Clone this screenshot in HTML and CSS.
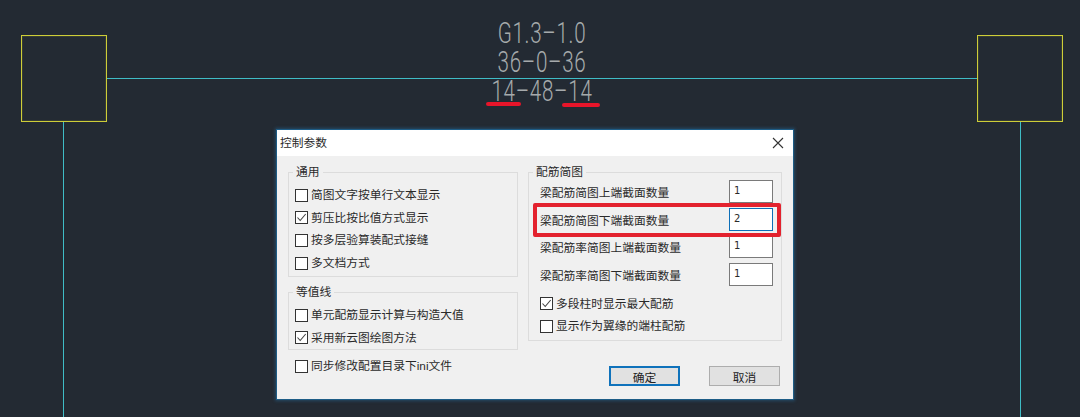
FILE: index.html
```html
<!DOCTYPE html>
<html lang="zh-CN">
<head>
<meta charset="utf-8">
<title>控制参数</title>
<link rel="stylesheet" href="styles.css">
</head>
<body>
<main class="canvas">
  <div class="column-box box-left"></div>
  <div class="column-box box-right"></div>
  <div class="beam-line"></div>
  <div class="col-line col-line-left"></div>
  <div class="col-line col-line-right"></div>
  <div class="cad-text cad-1">G1.3–1.0</div>
  <div class="cad-text cad-2">36–0–36</div>
  <div class="cad-text cad-3">14–48–14</div>
  <div class="mark mark-a"></div>
  <div class="mark mark-b"></div>

  <section class="dialog">
    <header class="titlebar">
      <span class="title">控制参数</span>
      <svg class="close" width="12" height="12" viewBox="0 0 12 12"><path d="M1 1 L11 11 M11 1 L1 11" stroke="#333" stroke-width="1.1" fill="none"/></svg>
    </header>
    <div class="body">
      <div class="col col-l">
        <fieldset class="group g-general">
          <legend>通用</legend>
          <label class="check"><span class="box"></span>简图文字按单行文本显示</label>
          <label class="check"><span class="box on"><svg width="11" height="11" viewBox="0 0 11 11"><path d="M1.5 5.5 L4.2 8.5 L9.7 2" stroke="#444" stroke-width="1.1" fill="none"/></svg></span>剪压比按比值方式显示</label>
          <label class="check"><span class="box"></span>按多层验算装配式接缝</label>
          <label class="check"><span class="box"></span>多文档方式</label>
        </fieldset>
        <fieldset class="group g-contour">
          <legend>等值线</legend>
          <label class="check"><span class="box"></span>单元配筋显示计算与构造大值</label>
          <label class="check"><span class="box on"><svg width="11" height="11" viewBox="0 0 11 11"><path d="M1.5 5.5 L4.2 8.5 L9.7 2" stroke="#444" stroke-width="1.1" fill="none"/></svg></span>采用新云图绘图方法</label>
        </fieldset>
        <label class="check check-sync"><span class="box"></span>同步修改配置目录下ini文件</label>
      </div>
      <div class="col col-r">
        <fieldset class="group g-rebar">
          <legend>配筋简图</legend>
          <div class="field"><span>梁配筋简图上端截面数量</span><span class="input">1</span></div>
          <div class="field"><span>梁配筋简图下端截面数量</span><span class="input focus">2</span></div>
          <div class="field"><span>梁配筋率简图上端截面数量</span><span class="input">1</span></div>
          <div class="field"><span>梁配筋率简图下端截面数量</span><span class="input">1</span></div>
          <label class="check check-first"><span class="box on"><svg width="11" height="11" viewBox="0 0 11 11"><path d="M1.5 5.5 L4.2 8.5 L9.7 2" stroke="#444" stroke-width="1.1" fill="none"/></svg></span>多段柱时显示最大配筋</label>
          <label class="check"><span class="box"></span>显示作为翼缘的端柱配筋</label>
        </fieldset>
        <div class="actions">
          <button class="btn btn-primary" type="button">确定</button>
          <button class="btn" type="button">取消</button>
        </div>
      </div>
    </div>
    <div class="highlight"></div>
  </section>
</main>
</body>
</html>
```
FILE: styles.css
```css
* { box-sizing: border-box; }
html, body { margin: 0; padding: 0; }
body { width: 1080px; height: 417px; overflow: hidden; background: #232a33; }
.canvas { position: relative; width: 1080px; height: 417px; background: #232a33; overflow: hidden; }

.column-box { position: absolute; top: 35px; width: 86px; height: 87px; border: 1px solid #cdcd38; box-shadow: inset 0 0 0 1px rgba(190,190,50,.12); }
.box-left { left: 21px; }
.box-right { left: 977px; }
.beam-line { position: absolute; left: 107px; top: 78px; width: 870px; height: 1px; background: #3fbcc6; }
.col-line { position: absolute; top: 122px; width: 1px; height: 295px; background: #3fbcc6; }
.col-line-left { left: 63px; }
.col-line-right { left: 1020px; }

.cad-text {
  position: absolute; left: 440px; width: 204px; text-align: center;
  font-family: "Roboto", "Liberation Sans", sans-serif; font-weight: 300;
  font-size: 29px; line-height: 29px; color: #a6aaac; letter-spacing: 1px;
  transform: scaleX(.71);
}
.cad-1 { top: 19px; }
.cad-2 { top: 48px; }
.cad-3 { top: 77px; }

.mark { position: absolute; height: 4px; border-radius: 2px; background: #e8152a; }
.mark-a { left: 486px; top: 102px; width: 35px; }
.mark-b { left: 562px; top: 103px; width: 38px; }

.dialog {
  position: absolute; left: 277px; top: 130px; width: 516px; height: 269px;
  background: #f0f0f0; box-shadow: 0 0 0 1px #1d5c86, 0 0 3px 2px rgba(40,110,160,.45);
  font-family: "Liberation Sans", "Noto Sans CJK SC", sans-serif; font-size: 11.75px; color: #2a2a2a;
}
.titlebar {
  height: 26px; background: #fff; display: flex; align-items: center;
  justify-content: space-between; padding: 0 9px 0 3px;
}
.title { line-height: 26px; }
.close { display: block; }

.body { display: flex; gap: 10px; padding: 8px 0 0 11px; }
.col { display: flex; flex-direction: column; }
.col-l { width: 230px; }
.col-r { width: 254px; }

.group { margin: 0; padding: 0; border: 1px solid #dcdcdc; min-width: 0; }
.group legend { padding: 0 3px; margin-left: 4px; line-height: 16px; height: 16px; }
.g-general > .check, .g-contour > .check { margin-left: 6px; }
.g-rebar > .check, .g-rebar > .field { margin-left: 11px; margin-right: 8px; }

.g-general { height: 113px; padding-top: 4px; }
.g-contour { height: 66px; margin-top: 7px; padding-top: 4px; }
.g-rebar { height: 177px; }

.check { display: flex; align-items: center; gap: 3px; height: 22.6px; line-height: 22px; white-space: nowrap; }
.check-sync { margin-top: 5px; padding-left: 7px; }
.g-rebar > .check-first { margin-top: 7px; }
.box { width: 13px; height: 13px; border: 1px solid #333; background: #fff; display: flex; align-items: center; justify-content: center; flex: none; }
.box svg { display: block; }

.field { display: flex; justify-content: space-between; align-items: center; height: 23px; margin-bottom: 4.5px; }
.input { width: 44px; height: 23px; border: 1px solid #7a7a7a; background: #fff; padding-left: 4px; line-height: 19px; font-family: "DejaVu Sans", sans-serif; font-size: 10px; }
.input.focus { border-color: #0d6fb8; }

.actions { display: flex; justify-content: flex-end; gap: 29px; margin-top: 25px; padding-right: 2px; }
.btn { width: 71px; height: 20px; padding: 0; border: 1px solid #adadad; background: #e1e1e1; font: inherit; color: #222; }
.btn-primary { border: 2px solid #0f72bb; }

.highlight { position: absolute; left: 256px; top: 73px; width: 248px; height: 34px; border: 4px solid #e3222e; border-radius: 2px; }
```
